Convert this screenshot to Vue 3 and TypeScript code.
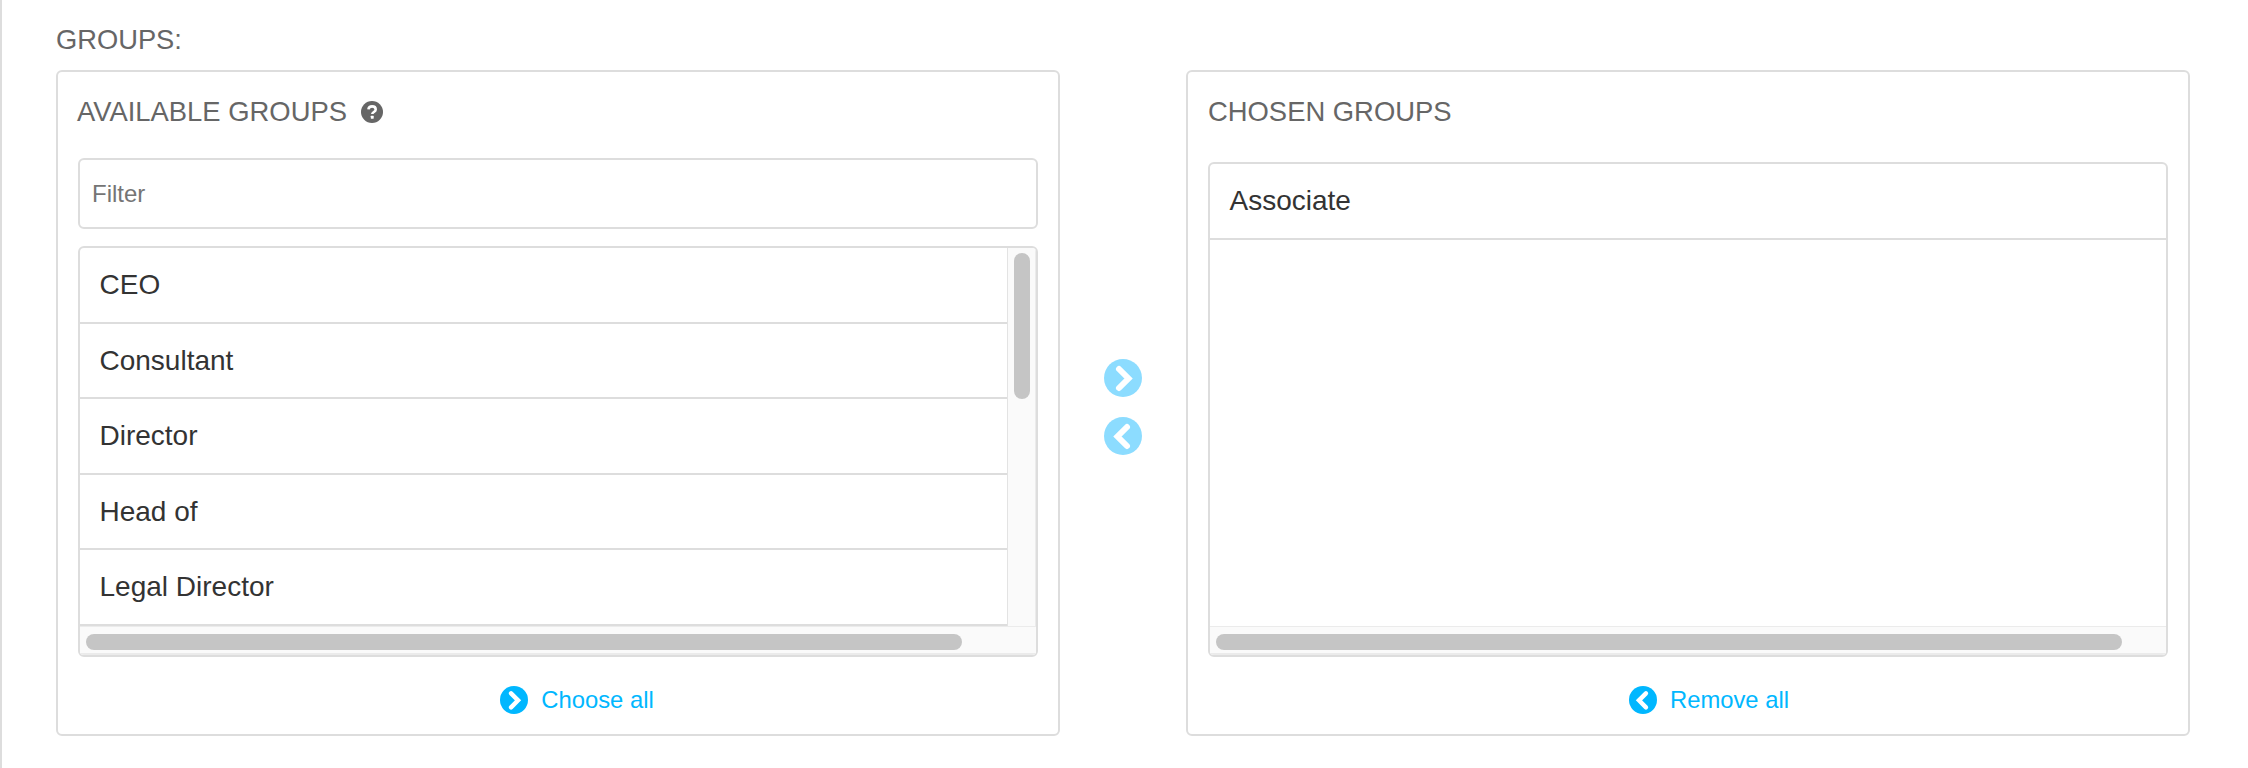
<script setup lang="ts">
const available = ['CEO', 'Consultant', 'Director', 'Head of', 'Legal Director']
const chosen = ['Associate']
</script>

<template>
  <div class="page">
    <div class="field-label">GROUPS:</div>
    <div class="selector">
      <!-- 左侧 -->
      <section class="box box-left">
        <h3 class="box-title">
          AVAILABLE GROUPS
          <svg class="help" viewBox="0 0 22 22">
            <circle cx="11" cy="11" r="11" fill="#666" />
            <path d="M7.4 8.4c.3-2 1.800-3 3.700-3 2.100 0 3.600 1.200 3.600 3 0 2.600-3.400 2.500-3.400 4.700" fill="none" stroke="#fff" stroke-width="2.600" />
            <rect x="9.800" y="14.800" width="2.900" height="2.900" rx=".4" fill="#fff" />
          </svg>
        </h3>
        <div class="filter">Filter</div>
        <div class="list">
          <div class="list-body">
            <ul class="rows">
              <li v-for="name in available" :key="name" class="row">{{ name }}</li>
            </ul>
            <div class="vbar"><div class="vthumb"></div></div>
          </div>
          <div class="hbar"><div class="hthumb hthumb-left"></div></div>
        </div>
        <a class="bulk bulk-choose">
          <svg class="bulk-icon" viewBox="0 0 38 38">
            <circle cx="19" cy="19" r="19" fill="#00b7ff" />
            <path d="M15 10l9.500 9.500L15 29" fill="none" stroke="#fff" stroke-width="6" stroke-linecap="round" />
          </svg>
          Choose all
        </a>
      </section>

      <!-- 中间按钮 -->
      <div class="movers">
        <svg class="mover" viewBox="0 0 38 38">
          <circle cx="19" cy="19" r="19" fill="#8cdcff" />
          <path d="M15 10l9.500 9.500L15 29" fill="none" stroke="#fff" stroke-width="6" stroke-linecap="round" />
        </svg>
        <svg class="mover" viewBox="0 0 38 38">
          <circle cx="19" cy="19" r="19" fill="#8cdcff" />
          <path d="M23 10l-9.500 9.500L23 29" fill="none" stroke="#fff" stroke-width="6" stroke-linecap="round" />
        </svg>
      </div>

      <!-- 右侧 -->
      <section class="box box-right">
        <h3 class="box-title">CHOSEN GROUPS</h3>
        <div class="list list-chosen">
          <div class="list-body">
            <ul class="rows">
              <li v-for="name in chosen" :key="name" class="row">{{ name }}</li>
            </ul>
          </div>
          <div class="hbar"><div class="hthumb hthumb-right"></div></div>
        </div>
        <a class="bulk bulk-remove">
          <svg class="bulk-icon" viewBox="0 0 38 38">
            <circle cx="19" cy="19" r="19" fill="#00b7ff" />
            <path d="M23 10l-9.500 9.500L23 29" fill="none" stroke="#fff" stroke-width="6" stroke-linecap="round" />
          </svg>
          Remove all
        </a>
      </section>
    </div>
  </div>
</template>

<style>
body {
  background: #fff;
}
</style>

<style scoped>
.page {
  box-sizing: border-box;
  width: 2248px;
  height: 768px;
  padding: 22px 0 0 54px;
  border-left: 2px solid #ddd;
  font-family: "Liberation Sans", Arial, sans-serif;
  overflow: hidden;
}

.field-label {
  font-size: 27.3px;
  line-height: 36px;
  height: 48px;
  color: #666;
}

.selector {
  display: flex;
  align-items: stretch;
  height: 666px;
}

.box {
  box-sizing: border-box;
  display: flex;
  flex-direction: column;
  border: 2px solid #ddd;
  border-radius: 6px;
  padding: 0 20px;
  width: 1004px;
}

.box-title {
  box-sizing: border-box;
  display: flex;
  align-items: center;
  gap: 14px;
  margin: 0 0 0 -1px;
  height: 86px;
  padding-bottom: 6px;
  font-size: 27.4px;
  font-weight: 400;
  color: #666;
}

.box-right .box-title {
  height: 90px;
  margin-left: 0;
  padding-bottom: 10px;
}

.help {
  width: 22px;
  height: 22px;
}

.filter {
  box-sizing: border-box;
  height: 71px;
  border: 2px solid #ddd;
  border-radius: 6px;
  padding-left: 12px;
  font-size: 24px;
  line-height: 67px;
  color: #757575;
  margin-bottom: 17px;
}

.list {
  box-sizing: border-box;
  display: flex;
  flex-direction: column;
  height: 411px;
  border: 2px solid #ddd;
  border-radius: 6px;
  overflow: hidden;
}

.list-chosen {
  height: 495px;
}

.list-body {
  flex: 1;
  display: flex;
  min-height: 0;
}

.rows {
  flex: 1;
  margin: 0;
  padding: 0;
  list-style: none;
}

.row {
  box-sizing: border-box;
  height: 75.6px;
  padding-left: 19.5px;
  font-size: 28px;
  line-height: 73px;
  color: #333;
  border-bottom: 2px solid #ddd;
}

.vbar {
  box-sizing: border-box;
  width: 29px;
  padding: 5px 5px 0 6px;
  background: #fafafa;
  border-left: 1px solid #e3e3e3;
  border-right: 1px solid #ebebeb;
}

.vthumb {
  height: 146px;
  border-radius: 8px;
  background: #c5c5c5;
}

.hbar {
  box-sizing: border-box;
  flex: none;
  height: 29px;
  padding: 7px 0 0 6px;
  background: #fafafa;
  border-top: 1px solid #ebebeb;
  border-bottom: 2px solid #ebebeb;
}

.hthumb {
  height: 16px;
  border-radius: 8px;
  background: #c5c5c5;
}

.hthumb-left {
  width: 876px;
}

.hthumb-right {
  width: 906px;
}

.bulk {
  display: flex;
  align-items: center;
  justify-content: center;
  gap: 13px;
  flex: 1;
  font-size: 23.8px;
  color: #00b7ff;
  padding-top: 9px;
}

.bulk-choose {
  padding-left: 38px;
}

.bulk-remove {
  padding-left: 42px;
}

.bulk-icon {
  width: 28px;
  height: 28px;
}

.movers {
  flex: none;
  width: 126px;
  display: flex;
  flex-direction: column;
  align-items: center;
  gap: 20px;
  padding-top: 289px;
}

.mover {
  width: 38px;
  height: 38px;
}
</style>
